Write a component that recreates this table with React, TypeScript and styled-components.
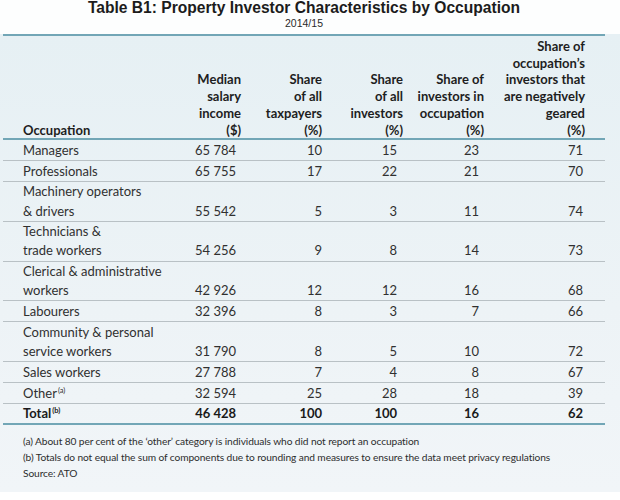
import React from "react";
import styled, { createGlobalStyle } from "styled-components";

const Global = createGlobalStyle`
  html, body { margin: 0; padding: 0; background: #ffffff; }
  body { width: 620px; height: 500px; overflow: hidden; }
`;

const Page = styled.div`
  width: 620px;
  font-family: Lato, "Open Sans", sans-serif;
  color: #2b2b2b;
`;

const TitleBlock = styled.header`
  height: 34px;
  padding-right: 12px;
  display: flex;
  flex-direction: column;
  align-items: center;
  background: #fdfefe;
`;

const Title = styled.h1`
  margin: 0;
  font-family: "Liberation Sans", Arial, sans-serif;
  font-size: 15.6px;
  font-weight: 700;
  line-height: 15px;
  color: #1c1c1c;
`;

const Subtitle = styled.div`
  font-family: "Liberation Sans", Arial, sans-serif;
  font-size: 10.5px;
  line-height: 16px;
  color: #2a2a2a;
`;

const Panel = styled.section`
  padding: 0 15px 11px 3px;
  background: linear-gradient(#e6f0f4, #edf3f6 60%, #f1f5f8);
`;

const Table = styled.table`
  width: 602px;
  border-collapse: collapse;
  table-layout: fixed;
  border-top: 2px solid #72a6b6;
  border-bottom: 2px solid #72a6b6;
`;

const HeadCell = styled.th<{ $first?: boolean; $last?: boolean }>`
  padding: 2px ${(p) => (p.$last ? "20px" : "0")} 0 ${(p) => (p.$first ? "20px" : "0")};
  vertical-align: bottom;
  text-align: ${(p) => (p.$first ? "left" : "right")};
  font-size: 13px;
  line-height: 16.7px;
  font-weight: 700;
  color: #1e1e1e;
  border-bottom: 2px solid #72a6b6;
  white-space: nowrap;
`;

const Row = styled.tr<{ $total?: boolean }>`
  border-bottom: 1px solid ${(p) => (p.$total ? "#72a6b6" : "#b9c1c5")};
  font-weight: ${(p) => (p.$total ? 700 : 400)};
  color: ${(p) => (p.$total ? "#1a1a1a" : "#303030")};
`;

const Cell = styled.td<{ $first?: boolean; $inset?: number }>`
  padding: 0.7px ${(p) => (p.$inset ?? 0)}px 0 ${(p) => (p.$first ? "20px" : "0")};
  text-align: ${(p) => (p.$first ? "left" : "right")};
  vertical-align: bottom;
  font-size: 13px;
  line-height: 19.1px;
  white-space: nowrap;
`;

const Sup = styled.sup`
  font-size: 7.5px;
  line-height: 0;
  vertical-align: 5px;
  margin-left: 1px;
`;

const Notes = styled.div`
  margin-top: 8px;
  padding-left: 20px;
  font-size: 10.2px;
  line-height: 16px;
  color: #2d2d2d;
  letter-spacing: -0.1px;
`;

const insets = [5, 0, 6, 5, 22];

type R = { name: React.ReactNode; vals: string[]; total?: boolean };

const rows: R[] = [
  { name: "Managers", vals: ["65 784", "10", "15", "23", "71"] },
  { name: "Professionals", vals: ["65 755", "17", "22", "21", "70"] },
  { name: <>Machinery operators<br />&amp; drivers</>, vals: ["55 542", "5", "3", "11", "74"] },
  { name: <>Technicians &amp;<br />trade workers</>, vals: ["54 256", "9", "8", "14", "73"] },
  { name: <>Clerical &amp; administrative<br />workers</>, vals: ["42 926", "12", "12", "16", "68"] },
  { name: "Labourers", vals: ["32 396", "8", "3", "7", "66"] },
  { name: <>Community &amp; personal<br />service workers</>, vals: ["31 790", "8", "5", "10", "72"] },
  { name: "Sales workers", vals: ["27 788", "7", "4", "8", "67"] },
  { name: <>Other<Sup>(a)</Sup></>, vals: ["32 594", "25", "28", "18", "39"] },
  { name: <>Total<Sup>(b)</Sup></>, vals: ["46 428", "100", "100", "16", "62"], total: true },
];

export default function App() {
  return (
    <Page>
      <Global />
      <TitleBlock>
        <Title>Table B1: Property Investor Characteristics by Occupation</Title>
        <Subtitle>2014/15</Subtitle>
      </TitleBlock>
      <Panel>
        <Table>
          <colgroup>
            <col style={{ width: 157 }} />
            <col style={{ width: 81 }} />
            <col style={{ width: 81 }} />
            <col style={{ width: 81 }} />
            <col style={{ width: 81 }} />
            <col style={{ width: 121 }} />
          </colgroup>
          <thead>
            <tr>
              <HeadCell $first>Occupation</HeadCell>
              <HeadCell>Median<br />salary<br />income<br />($)</HeadCell>
              <HeadCell>Share<br />of all<br />taxpayers<br />(%)</HeadCell>
              <HeadCell>Share<br />of all<br />investors<br />(%)</HeadCell>
              <HeadCell>Share of<br />investors in<br />occupation<br />(%)</HeadCell>
              <HeadCell $last>Share of<br />occupation’s<br />investors that<br />are negatively<br />geared<br />(%)</HeadCell>
            </tr>
          </thead>
          <tbody>
            {rows.map((r, i) => (
              <Row key={i} $total={r.total}>
                <Cell $first>{r.name}</Cell>
                {r.vals.map((v, j) => (
                  <Cell key={j} $inset={insets[j]}>{v}</Cell>
                ))}
              </Row>
            ))}
          </tbody>
        </Table>
        <Notes>
          (a) About 80 per cent of the ‘other’ category is individuals who did not report an occupation
          <br />
          (b) Totals do not equal the sum of components due to rounding and measures to ensure the data meet privacy regulations
          <br />
          Source: ATO
        </Notes>
      </Panel>
    </Page>
  );
}
